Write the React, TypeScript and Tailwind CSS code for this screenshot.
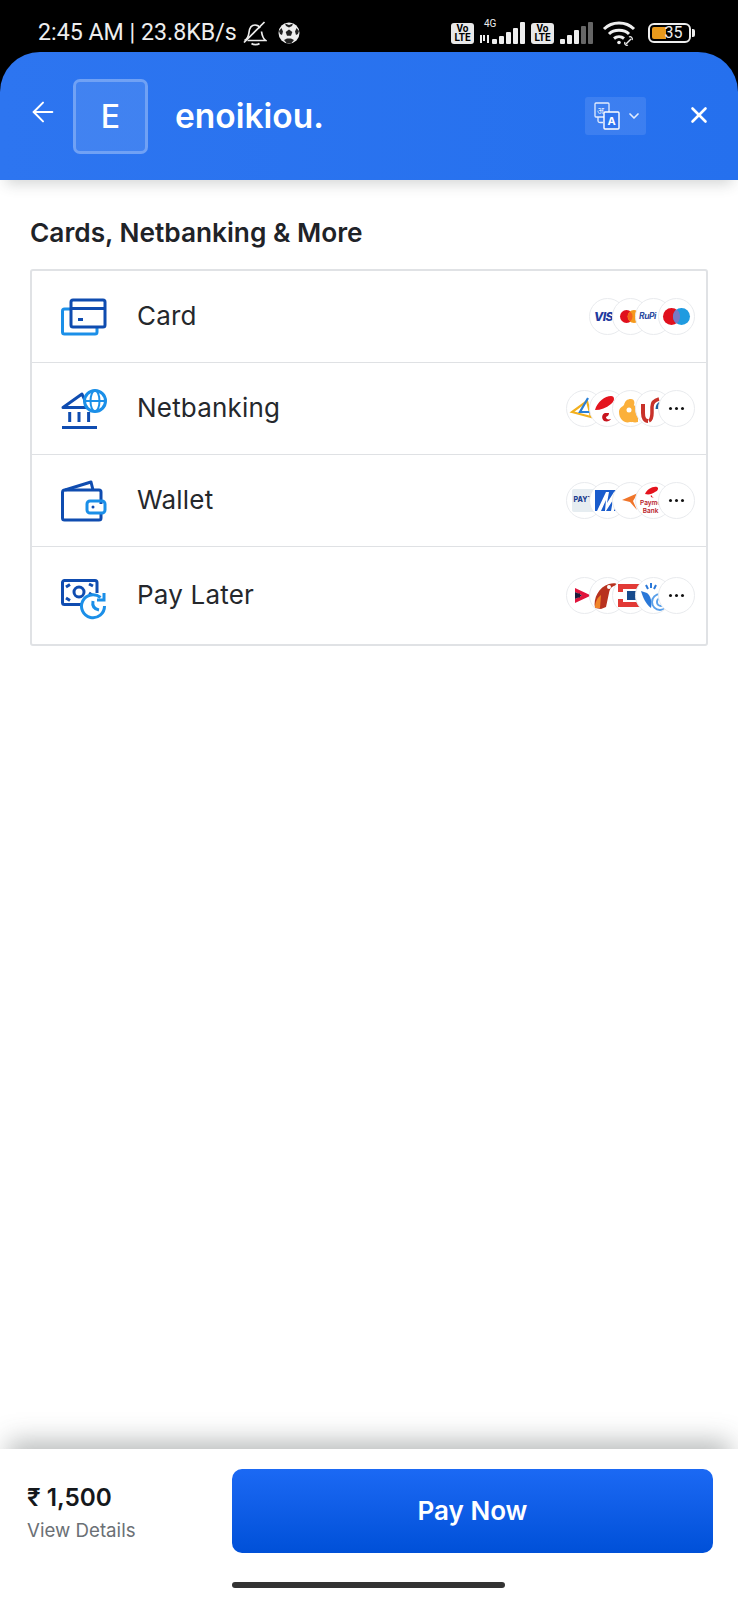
import type { ReactNode } from 'react';
import { ArrowLeft, ChevronDown, X } from 'lucide-react';

const FONT = "font-['Inter','Noto_Sans',sans-serif]";

function Volte() {
  return (
    <div className="flex h-[21px] w-[23px] flex-col items-center justify-center rounded-[3px] bg-[#e8e8e8] font-['Roboto',sans-serif] text-[10px] font-bold leading-[9px] text-black">
      <span>Vo</span>
      <span>LTE</span>
    </div>
  );
}

function Signal({ bars, dim, width }: { bars: number[]; dim: number; width: number }) {
  return (
    <svg width={width} height="22" viewBox={`0 0 ${width} 22`}>
      {bars.map((h, i) => (
        <rect
          key={i}
          x={width - (bars.length - i) * 7 + 1}
          y={22 - h}
          width="5"
          height={h}
          rx="1"
          fill={i >= bars.length - dim ? '#666' : '#eee'}
        />
      ))}
    </svg>
  );
}

function StatusBar() {
  return (
    <div className="flex h-[52px] shrink-0 items-center bg-black pl-[38px] pr-[43px] pt-[14px] text-[#eee]">
      <span className="font-['Roboto',sans-serif] text-[23.2px] leading-none">2:45 AM | 23.8KB/s</span>
      {/* muted bell */}
      <svg className="ml-[6px]" width="24" height="25" viewBox="0 0 24 25" fill="none" stroke="#eee" strokeWidth="1.700">
        <path d="M1.500 19.500c3-1.500 4-4 4.500-8C6.500 6.500 9 4 12 4c2.500 0 4 1 5 3" />
        <path d="M18.500 10.500c.5 3.500 1.500 7 4 9H4.500" />
        <path d="M8.500 22.500c2 1.500 6 1.500 8 0" />
        <path d="M1 21.500 21.500 1" />
      </svg>
      {/* football */}
      <svg className="ml-[11px]" width="22" height="22" viewBox="0 0 22 22">
        <circle cx="11" cy="11" r="10.500" fill="#eee" />
        <path d="M11 7.500l3.300 2.400-1.300 3.900H9l-1.300-3.900z" fill="#222" />
        <path d="M7 1.500l4 1.500 4-1.500-1 2.500-3 1.500-3-1.500zM1 9l2.500-3 1.500 3.500-1 3.500-2-1zM21 9l-2.500-3-1.500 3.500 1 3.500 2-1zM6 18l3-1.500h4l3 1.500-2.500 3h-5z" fill="#222" />
      </svg>

      <div className="ml-auto flex items-center">
        <Volte />
        <div className="relative ml-[6px] h-[22px] w-[46px]">
          <span className="absolute left-[4px] top-[-3px] font-['Roboto',sans-serif] text-[10px] leading-none">4G</span>
          <div className="absolute bottom-0 right-0">
            <Signal bars={[5, 8, 12, 16, 22]} dim={0} width={35} />
          </div>
          <div className="absolute bottom-[1px] left-0 flex gap-[1px]">
            <div className="h-[8px] w-[2px] bg-[#eee]" />
            <div className="h-[6px] w-[2px] bg-[#eee]" />
            <div className="ml-[1px] h-[8px] w-[2px] bg-[#eee]" />
          </div>
        </div>
        <div className="ml-[5px]">
          <Volte />
        </div>
        <div className="ml-[5px]">
          <Signal bars={[5, 9, 14, 18, 22]} dim={2} width={35} />
        </div>
        {/* wifi with link */}
        <svg className="ml-[8px]" width="34" height="26" viewBox="0 0 34 26" fill="none" stroke="#eee" strokeWidth="3">
          <path d="M2 9c8-8 22-8 30 0" />
          <path d="M7 14c5-5 15-5 20 0" />
          <path d="M12 18.500c3-2.500 7-2.500 10 0" />
          <circle cx="17" cy="22.500" r="1.800" fill="#eee" stroke="none" />
          <path d="M24 24l5-5" strokeWidth="1.500" />
          <path d="M27 17c2-1 4 1 3 3M26 25c-2 1-4-1-3-3" strokeWidth="1.300" />
        </svg>
        <div className="ml-[12px] flex items-center">
          <div className="relative flex h-[20px] w-[43px] items-center justify-center rounded-[6px] border-2 border-[#eee] p-[2px]">
            <div className="absolute bottom-[2px] left-[2px] top-[2px] w-[14px] rounded-l-[2px] bg-[#e89a1c]" />
            <span className="relative ml-[8px] font-['Roboto',sans-serif] text-[16px] leading-none">35</span>
          </div>
          <div className="ml-[1px] h-[8px] w-[3px] rounded-r-[2px] bg-[#eee]" />
        </div>
      </div>
    </div>
  );
}

function LanguageIcon() {
  return (
    <svg width="26" height="28" viewBox="0 0 26 28" fill="none">
      <rect x="1" y="1" width="14" height="14" rx="1" stroke="#e3edfd" strokeWidth="1.300" />
      <text x="3" y="11.500" fontSize="9" fill="#e3edfd" fontFamily="'Noto Sans', sans-serif">अ</text>
      <path d="M4 15v4c0 1 1 1.500 2 1.500h3" stroke="#e3edfd" strokeWidth="1.300" />
      <rect x="10" y="10" width="15" height="17" rx="1" fill="#2f74ee" stroke="#fff" strokeWidth="1.400" />
      <text x="17.500" y="23" fontSize="11" fontWeight="700" textAnchor="middle" fill="#fff" fontFamily="Inter, sans-serif">A</text>
    </svg>
  );
}

function Header() {
  return (
    <div className="relative z-10 flex h-[128px] shrink-0 items-center rounded-t-[40px] bg-gradient-to-r from-[#2d75f0] to-[#2570ee] pl-[27px] pr-[26px] text-white shadow-[0_10px_14px_-6px_rgba(60,70,70,0.22)]">
      <ArrowLeft size={32} strokeWidth={1.500} className="-mt-[8px]" />
      <div className="ml-[14px] flex h-[75px] w-[75px] items-center justify-center rounded-[7px] border-[3px] border-white/25 bg-white/10 pt-[2px] text-[32px] font-medium">
        E
      </div>
      <span className="ml-[27px] pt-[2px] text-[33.5px] font-semibold leading-none">enoikiou.</span>
      <div className="ml-auto flex h-[38px] w-[61px] items-center gap-[6px] rounded-[3px] bg-white/10 pl-[9px]">
        <LanguageIcon />
        <ChevronDown size={16} strokeWidth={2.500} className="text-[#e3edfd]" />
      </div>
      <X size={26} strokeWidth={2.400} className="ml-[40px] -mt-[2px]" />
    </div>
  );
}

function CardIcon() {
  return (
    <svg width="46" height="38" viewBox="0 0 46 38" fill="none" strokeWidth="3" strokeLinejoin="round">
      <path d="M10 11H3.500a2 2 0 0 0-2 2v21a2 2 0 0 0 2 2H34a2 2 0 0 0 2-2v-5" stroke="#1b8fe8" />
      <rect x="10" y="2" width="34" height="27" rx="2" stroke="#0f4cb0" />
      <path d="M10 10.500h34" stroke="#0f4cb0" />
      <path d="M17 21.500h5" stroke="#0f4cb0" />
    </svg>
  );
}

function BankIcon() {
  return (
    <svg width="46" height="42" viewBox="0 0 46 42" fill="none" strokeWidth="3">
      <path d="M2 19.500 21 6l6 13.500zM2 19.500h28" stroke="#0f4cb0" strokeLinejoin="round" />
      <path d="M8.700 24v10M18 24v10M27.600 24v10" stroke="#0f4cb0" />
      <path d="M1 39.500h35" stroke="#0f4cb0" />
      <circle cx="34" cy="13" r="10.500" stroke="#1b8fe8" fill="#fff" />
      <ellipse cx="34" cy="13" rx="4.500" ry="10.500" stroke="#1b8fe8" strokeWidth="2" />
      <path d="M23.500 13h21" stroke="#1b8fe8" strokeWidth="2" />
    </svg>
  );
}

function WalletIcon() {
  return (
    <svg width="46" height="42" viewBox="0 0 46 42" fill="none" strokeWidth="3" strokeLinejoin="round">
      <path d="M4 10 30 2l2 8" stroke="#0f4cb0" />
      <path d="M40 24v-12a2 2 0 0 0-2-2H4a2.500 2.500 0 0 0-2.500 2.500V38a2 2 0 0 0 2 2H38a2 2 0 0 0 2-2v-6" stroke="#0f4cb0" />
      <rect x="26" y="21" width="18" height="12" rx="3" stroke="#1b8fe8" />
      <circle cx="32" cy="27" r="1.500" fill="#0f4cb0" />
    </svg>
  );
}

function PayLaterIcon() {
  return (
    <svg className="mt-[8px]" width="46" height="42" viewBox="0 0 46 42" fill="none" strokeWidth="3">
      <path d="M20 25.500H3.500a2 2 0 0 1-2-2V3.500a2 2 0 0 1 2-2H34a2 2 0 0 1 2 2V14" stroke="#0f4cb0" />
      <circle cx="18" cy="13" r="5" stroke="#0f4cb0" />
      <path d="M5 8l4-2.500M32 7l-4-2M5 19l4 2.500M31 16l-3-2" stroke="#0f4cb0" />
      <path d="M43.500 27a11.500 11.500 0 1 1-4-8.500" stroke="#1b8fe8" />
      <path d="M43 14v7h-7" stroke="#1b8fe8" />
      <path d="M32 22c-1 5 1 8 6 9" stroke="#1b8fe8" />
    </svg>
  );
}

function Circle({ children, first }: { children: ReactNode; first?: boolean }) {
  return (
    <div className={`relative flex h-[37px] w-[37px] items-center justify-center overflow-hidden rounded-full border border-[#e9ebee] bg-white ${first ? '' : '-ml-[14px]'}`}>
      {children}
    </div>
  );
}

function Logo({ children }: { children: ReactNode }) {
  return (
    <svg width="35" height="35" viewBox="0 0 35 35" fill="none">
      {children}
    </svg>
  );
}

function More() {
  return (
    <Circle>
      <div className="flex gap-[3px]">
        <div className="h-[3px] w-[3px] rounded-full bg-[#111]" />
        <div className="h-[3px] w-[3px] rounded-full bg-[#111]" />
        <div className="h-[3px] w-[3px] rounded-full bg-[#111]" />
      </div>
    </Circle>
  );
}

function CardLogos() {
  return (
    <>
      <Circle first>
        <span className="absolute left-[4px] text-[12px] font-extrabold italic tracking-tighter text-[#1f3a9e]">VIS</span>
      </Circle>
      <Circle>
        <Logo>
          <circle cx="13.500" cy="17.500" r="6.500" fill="#e0101d" />
          <circle cx="21" cy="17.500" r="6.500" fill="#f59a1c" />
          <path d="M17.200 12.500a6.500 6.500 0 0 1 0 10 6.500 6.500 0 0 1 0-10z" fill="#f4621c" />
        </Logo>
      </Circle>
      <Circle>
        <span className="absolute left-[3px] text-[8.500px] font-bold italic tracking-tighter text-[#2b4aa0]">RuPi</span>
      </Circle>
      <Circle>
        <Logo>
          <circle cx="12.500" cy="17.500" r="8.500" fill="#e0101d" />
          <circle cx="22.500" cy="17.500" r="8.500" fill="#1f9be0" />
          <path d="M17.500 10.600a8.500 8.500 0 0 1 0 13.800 8.500 8.500 0 0 1 0-13.800z" fill="#7a79c4" />
        </Logo>
      </Circle>
    </>
  );
}

function BankLogos() {
  return (
    <>
      <Circle first>
        <Logo>
          <path d="M5 21l19 5-4-16z" stroke="#f2b01e" strokeWidth="2.200" />
          <path d="M21 7l-8 14 13 0" stroke="#2a7fd6" strokeWidth="2.200" />
        </Logo>
      </Circle>
      <Circle>
        <Logo>
          <path d="M5 19C7 11 15 5 21 5c4 0 4 5 0 8-5 4-10 6-16 6z" fill="#e4141e" />
          <path d="M15 22c-3 1-4 5-1 8 3 1 6 0 7-2-3 1-5 0-5-2 2-1 3-2 3-4z" fill="#c8141e" />
        </Logo>
      </Circle>
      <Circle>
        <Logo>
          <path d="M6 21c0-4 3-5 5-7 1-4 3-6 7-6 3 0 4 3 3 6 2 2 4 5 4 9v8c-3 1-6 0-8 0-3 1-6 0-8-2s-3-5-3-8z" fill="#fbb03b" />
          <circle cx="16" cy="19" r="2.500" fill="#fff" />
        </Logo>
      </Circle>
      <Circle>
        <Logo>
          <path d="M7 13v9c0 5 2 8 5 8" stroke="#c8322a" strokeWidth="4" />
          <path d="M13 30c2-1 3-4 3-8v-6c0-4 3-7 7-8" stroke="#c8322a" strokeWidth="3.500" />
          <path d="M21 18c0-3 1-5 4-6" stroke="#1c5f9e" strokeWidth="3" />
        </Logo>
      </Circle>
      <More />
    </>
  );
}

function WalletLogos() {
  return (
    <>
      <Circle first>
        <div className="absolute left-[5px] flex h-[23px] w-[24px] items-center justify-center rounded-[2px] bg-[#e6edf1] text-[7px] font-extrabold text-[#1c3f8f]">
          PAYTI
        </div>
      </Circle>
      <Circle>
        <Logo>
          <rect x="5" y="7" width="22" height="21" fill="#1a5ccc" />
          <path d="M7 28l9-19h3l-2 11 7-11h3l-3 19h-3l2-11-7 11-1 0 1-11-5 11z" fill="#fff" />
        </Logo>
      </Circle>
      <Circle>
        <Logo>
          <path d="M9 17l16-7-5 8 4 9-7-8z" fill="#f0752a" />
        </Logo>
      </Circle>
      <Circle>
        <div className="absolute left-[4px] flex flex-col items-center">
          <svg width="18" height="13" viewBox="0 0 18 13">
            <path d="M3 8C5 3 11 0 15 1c2 1 1 4-2 5-3 2-6 3-10 2z" fill="#e4141e" />
            <path d="M9 9c-1 2 1 3 3 2-1 0-2 0-2-1z" fill="#e4141e" />
          </svg>
          <span className="text-[6.500px] font-semibold leading-[8px] text-[#b8202a]">Payme</span>
          <span className="text-[6.500px] font-semibold leading-[8px] text-[#b8202a]">Bank</span>
        </div>
      </Circle>
      <More />
    </>
  );
}

function PayLaterLogos() {
  return (
    <>
      <Circle first>
        <Logo>
          <path d="M8 10l16 7.500L8 25v-4l7-3.500L8 14z" fill="#e0143c" />
          <path d="M8 14l7 3.500L8 21z" fill="#1a1a3a" />
          <path d="M8 15.500h5v4H8z" fill="#1a1a3a" />
        </Logo>
      </Circle>
      <Circle>
        <Logo>
          <path d="M5 30C3 20 9 9 19 6c4-1 8-1 8 1-5 1-7 3-8 8l-3 14-5 2z" fill="#b8321f" />
          <path d="M5 30c0-6 2-10 6-13l-1 13z" fill="#f0852a" />
          <circle cx="19" cy="9" r="2" fill="#fff" />
        </Logo>
      </Circle>
      <Circle>
        <Logo>
          <path d="M5 6h24v5H5zM5 24h24v5H5zM5 11h5v3H5zM5 21h5v3H5zM26 11h3v3h-3zM26 21h3v3h-3z" fill="#e23a36" />
          <rect x="14" y="13" width="9" height="9" fill="#174a8c" />
        </Logo>
      </Circle>
      <Circle>
        <Logo>
          <path d="M5 13c2 7 5 13 10 17 1-6 0-12-4-15z" fill="#2a78d8" />
          <circle cx="24" cy="24" r="8" stroke="#5aa0ea" strokeWidth="2" />
          <circle cx="25" cy="24" r="4" stroke="#5aa0ea" strokeWidth="2" />
          <path d="M15 5v5M10 7l2 4M20 7l-2 4" stroke="#2a78d8" strokeWidth="2" />
        </Logo>
      </Circle>
      <More />
    </>
  );
}

const ROWS = [
  { label: 'Card', icon: <CardIcon />, logos: <CardLogos />, height: 'h-[91px]' },
  { label: 'Netbanking', icon: <BankIcon />, logos: <BankLogos />, height: 'h-[92px]' },
  { label: 'Wallet', icon: <WalletIcon />, logos: <WalletLogos />, height: 'h-[92px]' },
  { label: 'Pay Later', icon: <PayLaterIcon />, logos: <PayLaterLogos />, height: 'h-[98px]' },
];

export default function App() {
  return (
    <div className={`flex h-[1600px] w-[738px] flex-col overflow-hidden bg-black ${FONT}`}>
      <StatusBar />
      <Header />

      <div className="flex-1 bg-white px-[30px] pt-[37px]">
        <h2 className="text-[26.250px] font-semibold leading-[32px] text-[#1f2328]">Cards, Netbanking &amp; More</h2>
        <div className="mt-[20px] rounded-[3px] border-2 border-[#e0e2e5]">
          {ROWS.map((row, i) => (
            <div
              key={row.label}
              className={`flex items-center pl-[29px] pr-[11px] ${row.height} ${i > 0 ? 'border-t-[1.5px] border-[#dfe1e4]' : ''}`}
            >
              <div className="flex w-[46px] justify-center">{row.icon}</div>
              <span className="ml-[30px] pb-[2px] text-[26px] leading-none tracking-[0.2px] text-[#25282c]">{row.label}</span>
              <div className="ml-auto flex items-center">{row.logos}</div>
            </div>
          ))}
        </div>
      </div>

      <div className="relative flex h-[151px] shrink-0 flex-col bg-white shadow-[0_-16px_24px_-8px_rgba(70,80,80,0.38)]">
        <div className="flex items-start pl-[27px] pr-[25px] pt-[20px]">
          <div className="w-[205px] pt-[13px]">
            <div className="text-[24.3px] font-semibold leading-[30px] text-[#15181c]">₹ 1,500</div>
            <div className="mt-[7px] text-[18.700px] leading-[24px] text-[#6b7075]">View Details</div>
          </div>
          <button className="flex h-[84px] flex-1 items-center justify-center rounded-[10px] bg-gradient-to-b from-[#1b69f4] to-[#0050d8] pb-[2px] text-[26px] font-semibold text-white">
            Pay Now
          </button>
        </div>
        <div className="ml-[232px] mt-[29px] h-[6px] w-[273px] rounded-full bg-[#333]" />
      </div>
    </div>
  );
}
